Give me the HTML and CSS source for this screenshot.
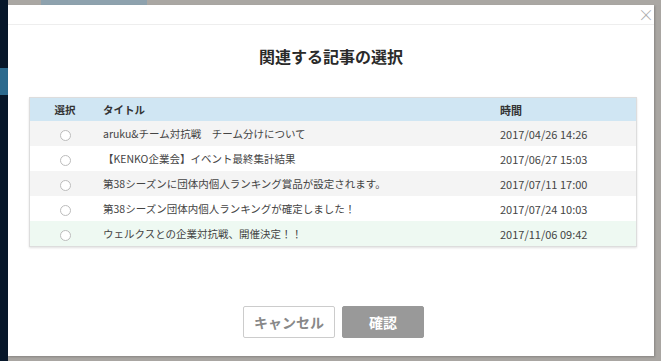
FILE: index.html
```html
<!DOCTYPE html>
<html lang="ja">
<head>
    <meta charset="UTF-8">
    <title>関連する記事の選択</title>
    <link rel="stylesheet" href="styles.css">
</head>
<body>
<div class="page">
    <div class="side"><div class="side-active"></div></div>
    <div class="main">
        <div class="topbar"><span class="top-tab"></span></div>
    </div>
</div>
<!--モーダル-->
<div class="modal">
    <div class="modal-head"><span class="close">&times;</span></div>
    <h2 class="modal-title">関連する記事の選択</h2>
    <div class="list">
        <table>
            <thead>
            <tr><th class="c-sel">選択</th><th class="c-title">タイトル</th><th class="c-time">時間</th></tr>
            </thead>
            <tbody>
            <tr><td class="c-sel"><i class="radio"></i></td><td class="c-title">aruku&amp;チーム対抗戦　チーム分けについて</td><td class="c-time">2017/04/26 14:26</td></tr>
            <tr><td class="c-sel"><i class="radio"></i></td><td class="c-title">【KENKO企業会】イベント最終集計結果</td><td class="c-time">2017/06/27 15:03</td></tr>
            <tr><td class="c-sel"><i class="radio"></i></td><td class="c-title">第38シーズンに団体内個人ランキング賞品が設定されます。</td><td class="c-time">2017/07/11 17:00</td></tr>
            <tr><td class="c-sel"><i class="radio"></i></td><td class="c-title">第38シーズン団体内個人ランキングが確定しました！</td><td class="c-time">2017/07/24 10:03</td></tr>
            <tr class="hover"><td class="c-sel"><i class="radio"></i></td><td class="c-title">ウェルクスとの企業対抗戦、開催決定！！</td><td class="c-time">2017/11/06 09:42</td></tr>
            </tbody>
        </table>
    </div>
    <div class="actions">
        <button class="btn btn-cancel">キャンセル</button>
        <button class="btn btn-ok">確認</button>
    </div>
</div>
</body>
</html>
```

FILE: styles.css
```css
* {
    margin: 0;
    padding: 0;
    box-sizing: border-box;
}

body {
    width: 661px;
    height: 361px;
    overflow: hidden;
    background: #a9a6a2;
    font-family: "Noto Sans CJK JP", "Noto Sans", sans-serif;
    color: #333;
}

.page {
    display: flex;
    height: 100%;
}

.side {
    width: 8px;
    background: #07172a;
    padding-top: 68px;
}

.side-active {
    height: 27px;
    background: #2c6a8e;
}

.main {
    flex: 1;
}

.topbar {
    height: 5px;
    background: #aaa7a3;
    padding-left: 33px;
}

.top-tab {
    display: block;
    width: 106px;
    height: 5px;
    background: #8ea2ae;
}

/* モーダル本体 */
.modal {
    position: absolute;
    left: 8px;
    top: 5px;
    width: 646px;
    height: 351px;
    background: #fff;
    box-shadow: 1px 1px 2px rgba(0, 0, 0, 0.2);
}

.modal-head {
    height: 20px;
    border-bottom: 1px solid #eee;
    display: flex;
    justify-content: flex-end;
}

.close {
    font-size: 16px;
    line-height: 18px;
    color: #aaa;
    margin-right: 0;
    font-weight: 300;
}

.modal-title {
    margin-top: 19px;
    text-align: center;
    font-size: 16px;
    font-weight: bold;
    line-height: 24px;
    color: #2a2a2a;
}

.list {
    margin: 29px 17px 0 21px;
    border: 1px solid #ddd;
    box-shadow: 0 1px 2px rgba(0, 0, 0, 0.12);
}

table {
    width: 100%;
    border-collapse: collapse;
    font-size: 10.5px;
}

th {
    background: #d0e6f3;
    height: 23px;
    text-align: left;
    font-weight: bold;
    color: #333;
}

td {
    height: 25px;
    color: #444;
}

tbody tr:nth-child(odd) {
    background: #f4f4f4;
}

tbody tr.hover {
    background: #eef9f2;
}

.c-sel {
    width: 70px;
    text-align: center;
}

.c-title {
    width: 400px;
    padding-left: 3px;
}

.c-time {
    padding-left: 0;
    font-size: 11px;
}

.radio {
    display: inline-block;
    width: 11px;
    height: 11px;
    border: 1px solid #bcbcbc;
    border-radius: 50%;
    background: #fff;
    vertical-align: middle;
}

.actions {
    display: flex;
    justify-content: center;
    gap: 7px;
    margin-top: 59px;
    padding-left: 5px;
}

.btn {
    height: 32px;
    font-family: inherit;
    font-size: 14px;
    font-weight: bold;
    border-radius: 2px;
}

.btn-cancel {
    width: 92px;
    background: #fff;
    border: 1px solid #ccc;
    color: #888;
}

.btn-ok {
    width: 82px;
    background: #999;
    border: 1px solid #999;
    color: #fff;
}
```
